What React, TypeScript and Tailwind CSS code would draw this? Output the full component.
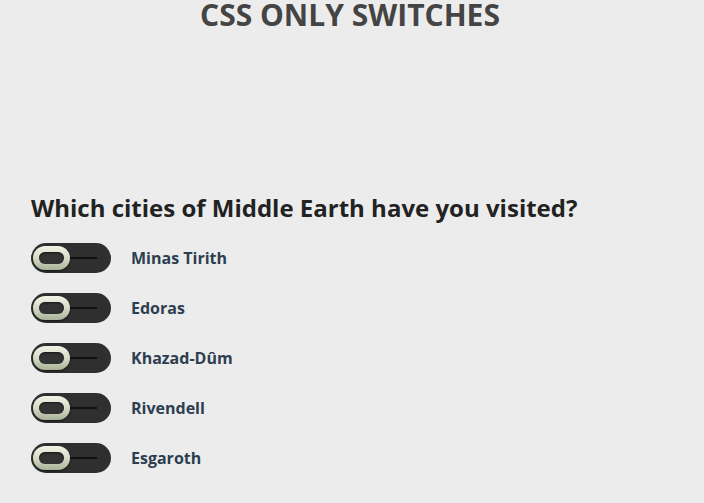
import React from 'react';

const cities = ['Minas Tirith', 'Edoras', 'Khazad-Dûm', 'Rivendell', 'Esgaroth'];

const Switch: React.FC = () => (
  <span className="relative block w-[80px] h-[30px] rounded-full bg-[#2f2f2f] shrink-0">
    {/* track line */}
    <span className="absolute left-[38px] top-[14px] w-[28px] h-[2px] bg-[#111]" />
    {/* knob */}
    <span className="absolute left-[2px] top-[3px] w-[37px] h-[24px] rounded-full bg-gradient-to-b from-[#f1f3e6] via-[#d6dbc6] to-[#a9b198] shadow-[0_1px_2px_rgba(0,0,0,0.6)] flex items-center justify-center">
      <span className="block w-[25px] h-[12px] rounded-full bg-[#333] shadow-[inset_0_1px_2px_rgba(0,0,0,0.6)]" />
    </span>
  </span>
);

export default function App() {
  return (
    <div className="w-[704px] h-[503px] bg-[#ececec] font-['Open_Sans',sans-serif] overflow-hidden">
      <h1 className="w-[700px] text-center text-[30px] leading-[30px] font-bold text-[#444]">
        CSS ONLY SWITCHES
      </h1>

      <div className="px-[31px] pt-[163px]">
        <h2 className="text-[24px] leading-[30px] font-bold text-[#222]">
          Which cities of Middle Earth have you visited?
        </h2>

        <ul className="flex flex-col gap-[20px] mt-[20px]">
          {cities.map((c) => (
            <li key={c} className="flex items-center gap-[20px] h-[30px]">
              <Switch />
              <span className="text-[16px] font-bold text-[#2c3e50]">{c}</span>
            </li>
          ))}
        </ul>
      </div>
    </div>
  );
}
